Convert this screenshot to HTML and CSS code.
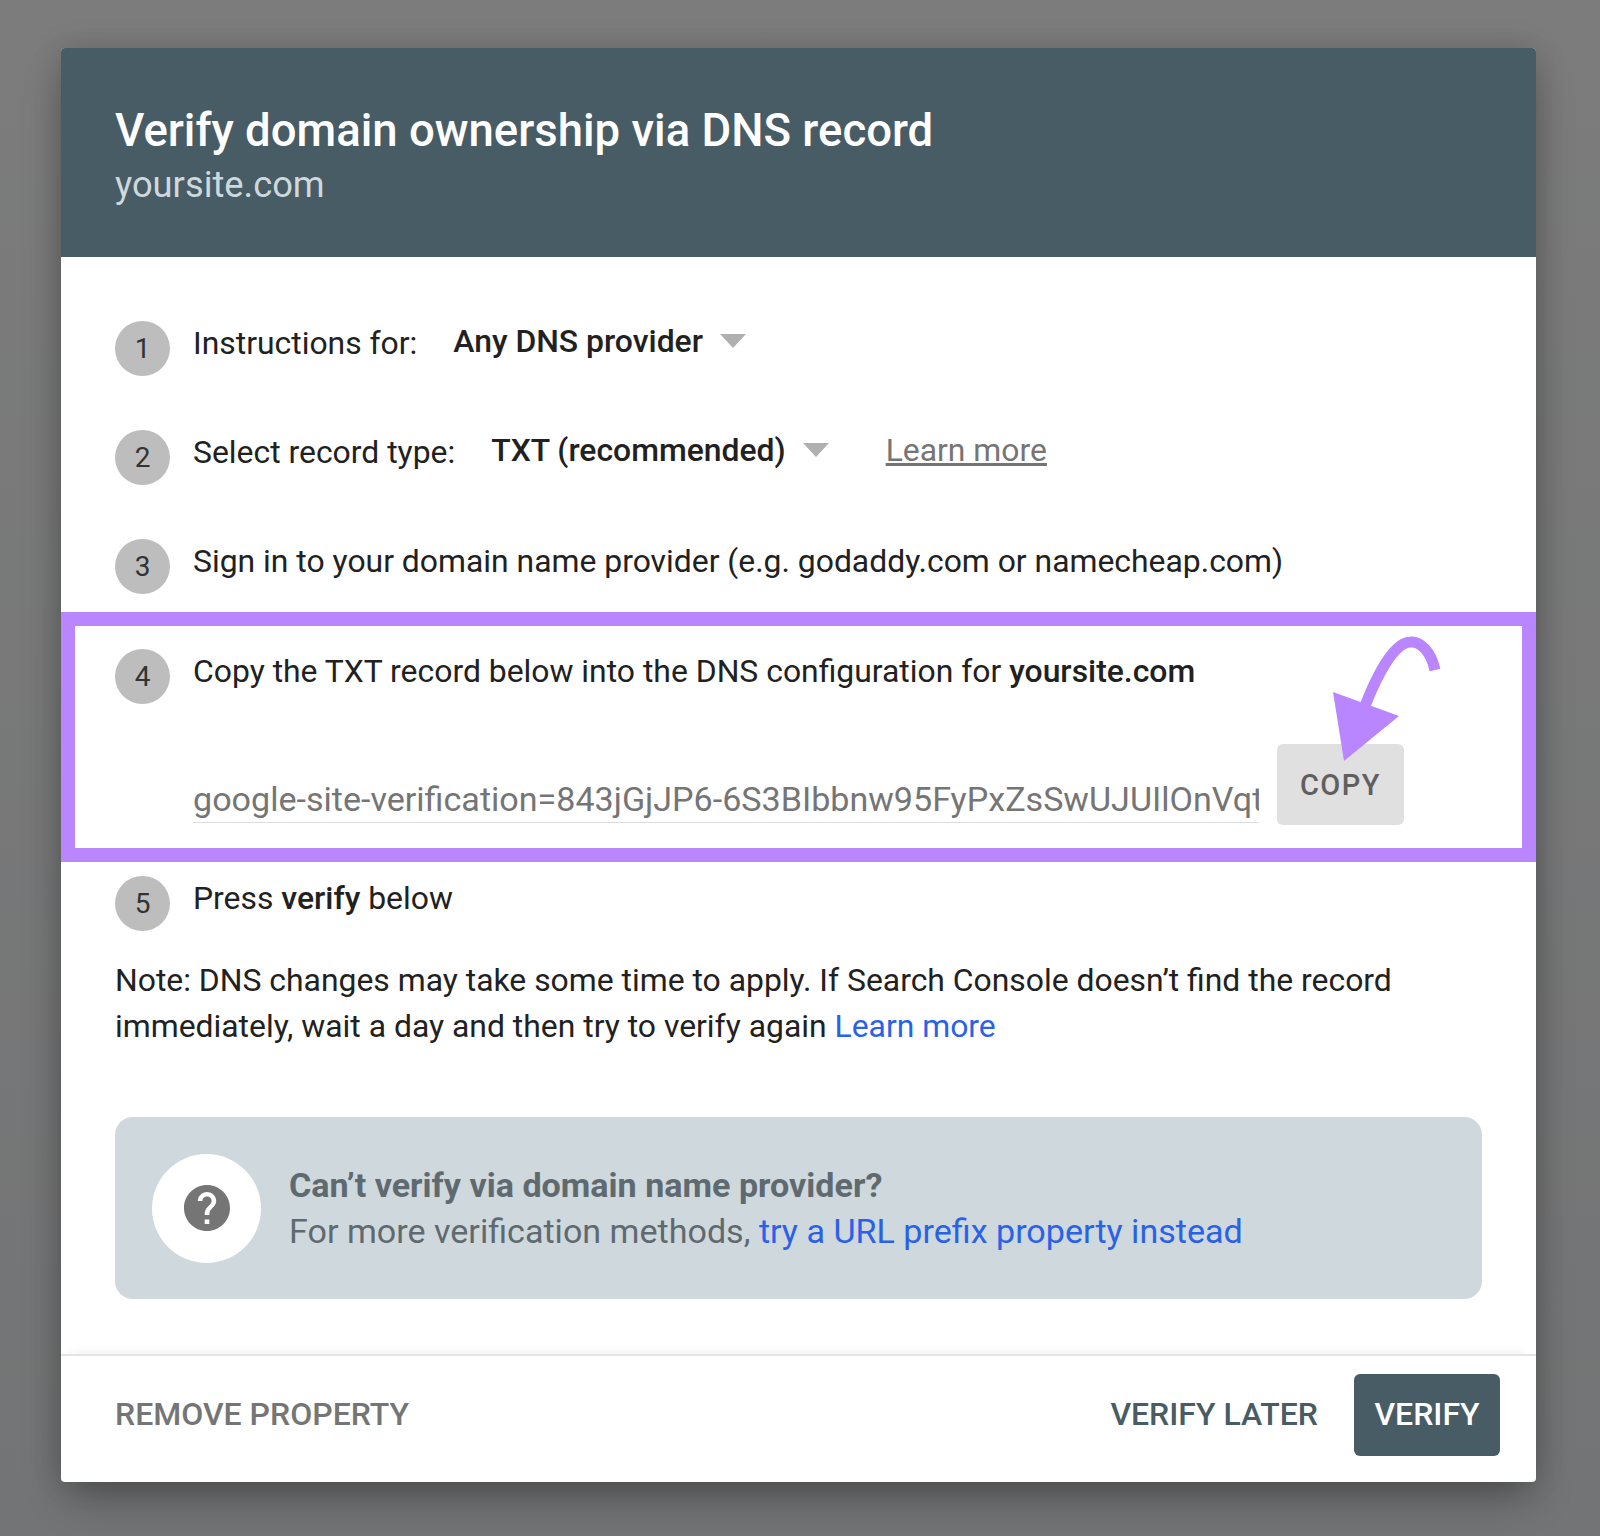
FILE: index.html
```html
<!DOCTYPE html>
<html lang="en">
  <head>
    <meta charset="UTF-8" />
    <meta name="viewport" content="width=device-width, initial-scale=1.0" />
    <title>Verify domain ownership</title>
    <link rel="stylesheet" href="styles.css">
  </head>
  <body>
    <div class="dialog">
      <div class="dialog-header">
        <div class="dialog-title">Verify domain ownership via DNS record</div>
        <div class="dialog-domain">yoursite.com</div>
      </div>

      <div class="dialog-body">
        <div class="step">
          <span class="step-number">1</span>
          <span class="step-label">Instructions for:</span>
          <span class="step-select">Any DNS provider</span>
          <span class="caret"></span>
        </div>
        <div class="step">
          <span class="step-number">2</span>
          <span class="step-label">Select record type:</span>
          <span class="step-select">TXT (recommended)</span>
          <span class="caret"></span>
          <a class="learn-grey" href="#">Learn more</a>
        </div>
        <div class="step">
          <span class="step-number">3</span>
          <span class="step-label">Sign in to your domain name provider (e.g. godaddy.com or namecheap.com)</span>
        </div>

        <div class="highlight">
          <div class="step step-flat">
            <span class="step-number">4</span>
            <span class="step-label">Copy the TXT record below into the DNS configuration for <b>yoursite.com</b></span>
          </div>
          <div class="record">
            <div class="record-value">google-site-verification=843jGjJP6-6S3BIbbnw95FyPxZsSwUJUIlOnVqt</div>
            <button class="copy-button">COPY</button>
          </div>
          <svg class="arrow" width="120" height="140" viewBox="1325 630 120 140">
            <path d="M1435 670C1431 652 1421 641 1410 642C1395 643 1379 670 1365 706" fill="none" stroke="#b986ff" stroke-width="11" />
            <path d="M1333 692L1399 716L1344 761Z" fill="#b986ff" />
          </svg>
        </div>

        <div class="step step-flat step-last">
          <span class="step-number">5</span>
          <span class="step-label">Press <b>verify</b> below</span>
        </div>

        <p class="note">Note: DNS changes may take some time to apply. If Search Console doesn’t find the record immediately, wait a day and then try to verify again <a href="#">Learn more</a></p>

        <div class="help-box">
          <div class="help-icon">
            <svg width="46" height="46" viewBox="2 2 20 20">
              <path fill="#757575" d="M12 2C6.480 2 2 6.480 2 12s4.480 10 10 10 10-4.480 10-10S17.520 2 12 2zm1 17h-2v-2h2v2zm2.070-7.750l-.9.920C13.450 12.900 13 13.500 13 15h-2v-.5c0-1.100.45-2.100 1.170-2.830l1.240-1.260c.37-.36.59-.86.59-1.410 0-1.100-.9-2-2-2s-2 .9-2 2H8c0-2.210 1.790-4 4-4s4 1.790 4 4c0 .88-.36 1.680-.93 2.250z" />
            </svg>
          </div>
          <div class="help-text">
            <div class="help-title">Can’t verify via domain name provider?</div>
            <div>For more verification methods, <a href="#">try a URL prefix property instead</a></div>
          </div>
        </div>
      </div>

      <div class="dialog-footer">
        <button class="text-button text-button-grey">REMOVE PROPERTY</button>
        <button class="text-button text-button-later">VERIFY LATER</button>
        <button class="verify-button">VERIFY</button>
      </div>
    </div>
  </body>
</html>
```

FILE: styles.css
```css
body {
  margin: 0;
  min-height: 1536px;
  box-sizing: border-box;
  padding: 48px 64px 0 61px;
  font-family: Roboto, "Liberation Sans", sans-serif;
  background: linear-gradient(180deg, #7c7c7c 0%, #737475 100%);
  color: #212121;
}
button {
  font-family: inherit;
  border: none;
  background: none;
  padding: 0;
}
a {
  text-decoration: none;
  color: #2962e8;
}
b {
  font-weight: 500;
}
.dialog {
  background: #fff;
  border-radius: 4px;
  box-shadow: 0 20px 40px -6px rgba(0, 0, 0, 0.3), 0 0 30px rgba(0, 0, 0, 0.14);
}
.dialog-header {
  height: 209px;
  box-sizing: border-box;
  padding: 56px 54px 0;
  background: #485c65;
  border-radius: 4px 4px 0 0;
}
.dialog-title {
  font-size: 45.500px;
  line-height: 54px;
  font-weight: 500;
  color: #fff;
}
.dialog-domain {
  font-size: 36.300px;
  line-height: 54px;
  color: #cfd8dc;
}
.dialog-body {
  padding-top: 64px;
}
.step {
  display: flex;
  align-items: flex-start;
  height: 55px;
  margin-bottom: 54px;
  padding: 0 54px;
  font-size: 31.880px;
  line-height: 45px;
}
.step-flat {
  margin-bottom: 0;
  padding: 0;
}
.step-last {
  margin-top: 14px;
  padding: 0 54px;
}
.step-number {
  flex: none;
  width: 55px;
  height: 55px;
  margin-right: 23px;
  border-radius: 50%;
  background: #bdbdbd;
  color: #333;
  font-size: 28px;
  line-height: 55px;
  text-align: center;
}
.step-select {
  margin-left: 36px;
  font-weight: 500;
  line-height: 41px;
}
.caret {
  width: 0;
  height: 0;
  margin: 13px 0 0 17px;
  border-left: 13.500px solid transparent;
  border-right: 13.500px solid transparent;
  border-top: 14px solid #b0b0b0;
}
.learn-grey {
  margin-left: 57px;
  line-height: 41px;
  color: #757575;
  text-decoration: underline;
}
.highlight {
  position: relative;
  height: 199px;
  margin-top: -36px;
  border: 14px solid #b986ff;
  padding: 23px 0 0 40px;
}
.record {
  display: flex;
  align-items: flex-start;
  margin: 40px 0 0 78px;
}
.record-value {
  width: 1066px;
  height: 79px;
  box-sizing: border-box;
  padding-top: 31px;
  overflow: hidden;
  white-space: nowrap;
  font-size: 34.100px;
  line-height: 48px;
  color: #757575;
  border-bottom: 1px solid #dcdcdc;
}
.copy-button {
  width: 127px;
  height: 81px;
  margin-left: 18px;
  border-radius: 6px;
  background: #e0e0e0;
  color: #5f5f5f;
  font-size: 29px;
  font-weight: 500;
  letter-spacing: 1.500px;
}
.arrow {
  position: absolute;
  top: 4px;
  right: 77px;
}
.note {
  margin: 26px 54px 0;
  font-size: 31.880px;
  line-height: 46px;
}
.help-box {
  display: flex;
  align-items: center;
  height: 182px;
  margin: 68px 54px 0;
  padding-left: 37px;
  border-radius: 18px;
  background: #cfd8dc;
}
.help-icon {
  display: flex;
  align-items: center;
  justify-content: center;
  flex: none;
  width: 109px;
  height: 109px;
  margin-right: 28px;
  border-radius: 50%;
  background: #fff;
}
.help-text {
  font-size: 34.100px;
  line-height: 46px;
  color: #5f6a70;
}
.help-title {
  font-weight: 700;
}
.dialog-footer {
  display: flex;
  align-items: flex-start;
  height: 128px;
  box-sizing: border-box;
  margin-top: 55px;
  padding: 18px 36px 0 54px;
  border-top: 2px solid #e4e4e4;
  box-shadow: 0 -10px 10px -10px rgba(0, 0, 0, 0.08);
}
.text-button {
  height: 82px;
  padding-bottom: 2px;
  font-size: 32px;
  font-weight: 500;
}
.text-button-grey {
  color: #757575;
  margin-right: auto;
}
.text-button-later {
  color: #485c65;
  margin-right: 36px;
}
.verify-button {
  width: 146px;
  height: 82px;
  padding-bottom: 2px;
  border-radius: 6px;
  background: #485c65;
  color: #fff;
  font-size: 32px;
  font-weight: 500;
}
```
